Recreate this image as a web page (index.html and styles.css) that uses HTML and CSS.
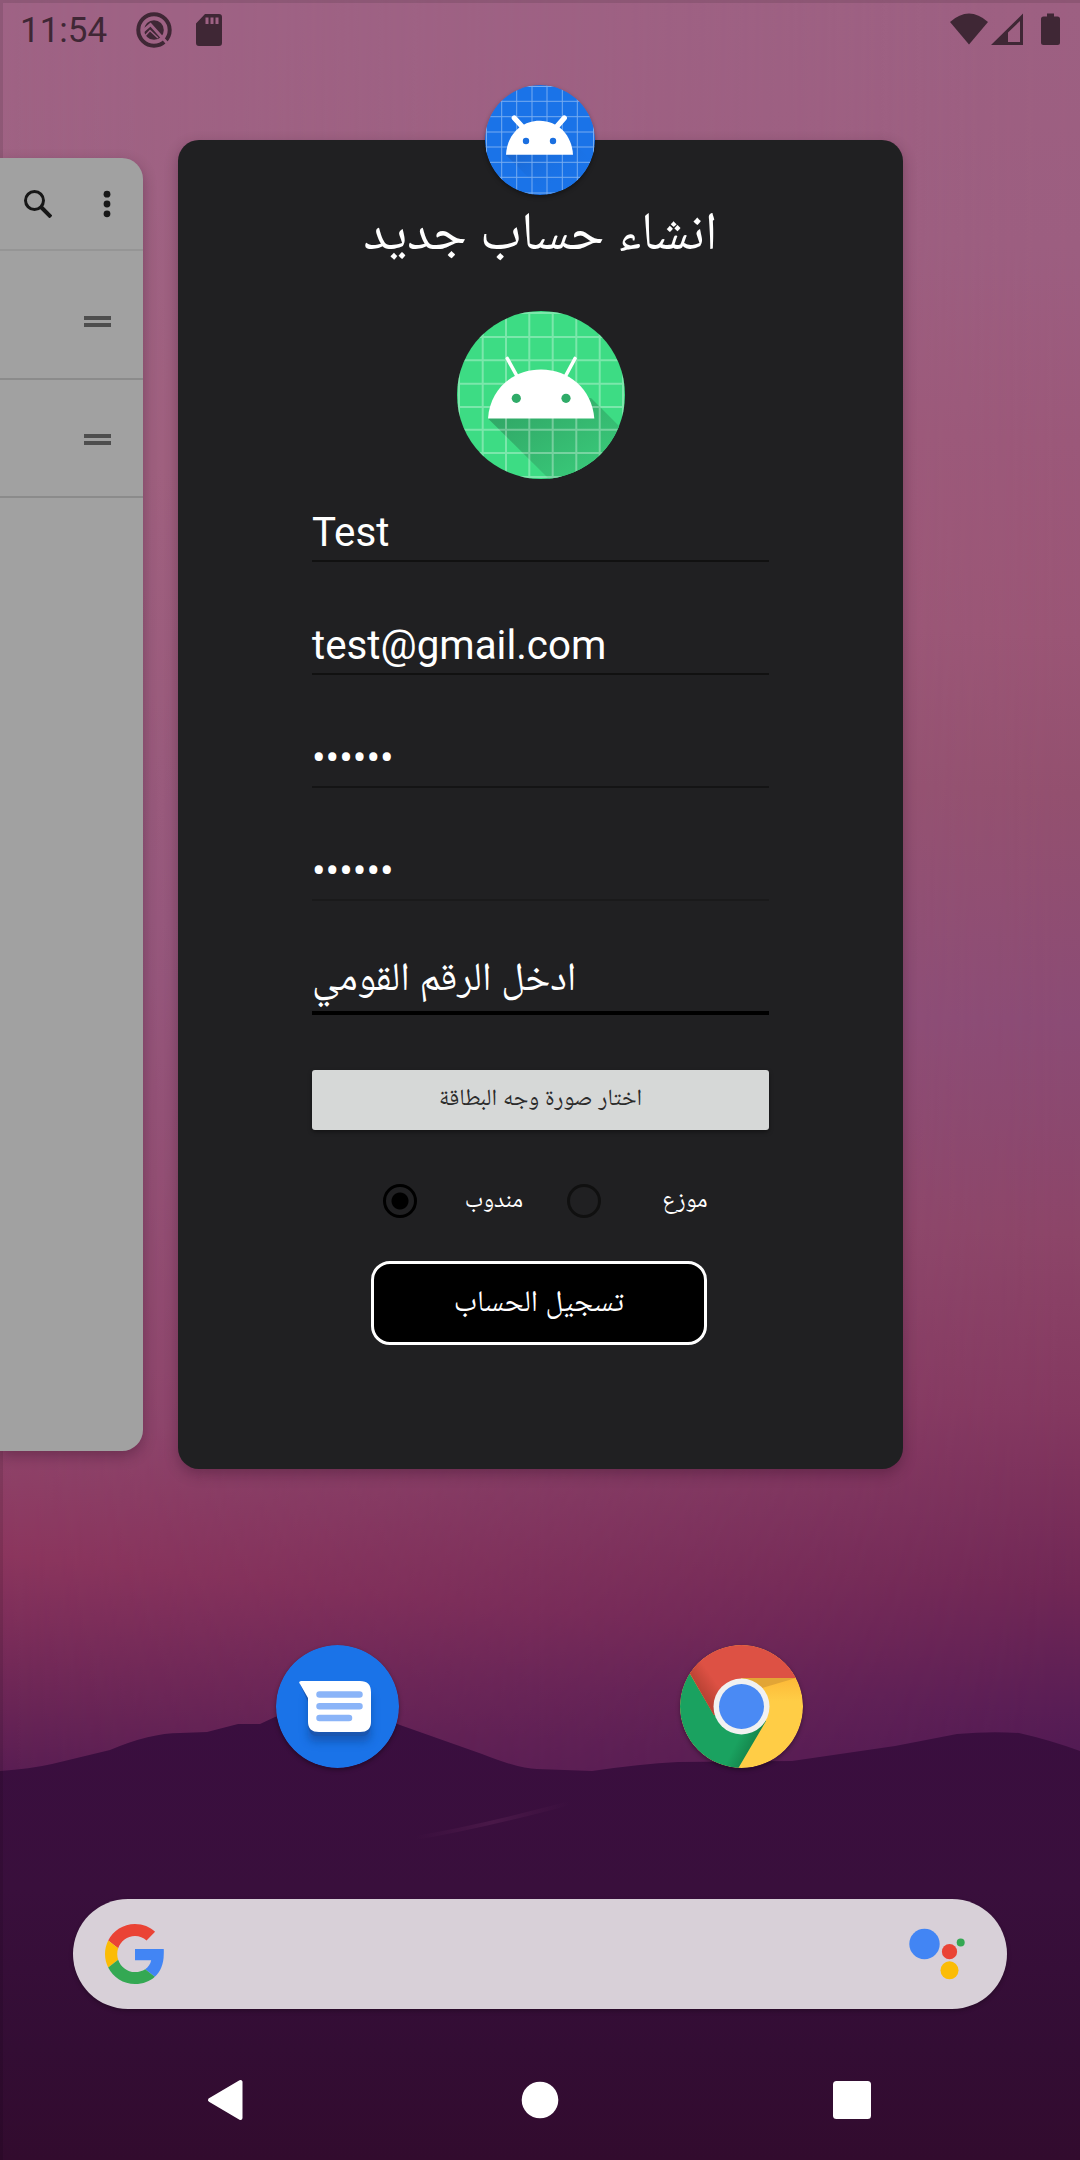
FILE: index.html
```html
<!DOCTYPE html>
<html lang="ar">
<head>
<meta charset="utf-8">
<title>Recent apps</title>
<link rel="stylesheet" href="styles.css">
</head>
<body>
<svg class="wallpaper" viewBox="0 0 1080 2160" aria-hidden="true">
  <defs>
    <linearGradient id="skyLeft" gradientUnits="userSpaceOnUse" x1="0" y1="0" x2="-180" y2="1790">
      <stop offset="0" stop-color="#9f6385"/><stop offset=".25" stop-color="#a06280"/>
      <stop offset=".5" stop-color="#985a7e"/><stop offset=".78" stop-color="#90486e"/>
      <stop offset=".86" stop-color="#8c365e"/><stop offset=".92" stop-color="#742a58"/>
      <stop offset="1" stop-color="#511a51"/>
    </linearGradient>
    <linearGradient id="skyRight" gradientUnits="userSpaceOnUse" x1="1080" y1="0" x2="1000" y2="1760">
      <stop offset="0" stop-color="#9d6082"/><stop offset=".14" stop-color="#9c5e80"/>
      <stop offset=".25" stop-color="#9b5879"/><stop offset=".36" stop-color="#9a5575"/>
      <stop offset=".45" stop-color="#93506f"/>
      <stop offset=".58" stop-color="#8b4b75"/><stop offset=".7" stop-color="#8c4568"/>
      <stop offset=".8" stop-color="#843860"/><stop offset=".9" stop-color="#702755"/>
      <stop offset=".97" stop-color="#581d55"/><stop offset="1" stop-color="#511a53"/>
    </linearGradient>
    <linearGradient id="fade" x1="0" y1="0" x2="1" y2="0">
      <stop offset="0" stop-color="#000"/><stop offset="1" stop-color="#fff"/>
    </linearGradient>
    <mask id="fadeMask"><rect width="1080" height="2160" fill="url(#fade)"/></mask>
    <linearGradient id="hill" x1="0" y1="0" x2="0" y2="1">
      <stop offset="0" stop-color="#3a0e3f"/><stop offset=".4" stop-color="#390f3c"/>
      <stop offset=".75" stop-color="#330d34"/><stop offset="1" stop-color="#320b2e"/>
    </linearGradient>
    <linearGradient id="ridge" gradientUnits="userSpaceOnUse" x1="415" y1="0" x2="570" y2="0">
      <stop offset="0" stop-color="#491848" stop-opacity="0"/><stop offset=".5" stop-color="#491848"/>
      <stop offset="1" stop-color="#491848" stop-opacity="0"/>
    </linearGradient>
  </defs>
  <rect width="1080" height="2160" fill="url(#skyLeft)"/>
  <rect width="1080" height="2160" fill="url(#skyRight)" mask="url(#fadeMask)"/>
  <path fill="url(#hill)" d="M0 1771Q30 1769 52 1764L110 1750Q150 1733 180 1733L207 1732L238 1724L260 1724L275 1717Q337 1698 400 1725L482 1754Q520 1769 537 1769L592 1771Q640 1764 678 1762L792 1761L895 1746L957 1734Q990 1731 1019 1733Q1050 1740 1080 1751V2160H0Z"/>
  <path fill="none" stroke="url(#ridge)" stroke-width="4" stroke-linecap="round" d="M415 1838Q480 1827 570 1803"/>
  <path fill="#000" opacity=".1" d="M0 0H1080V3H3V2160H0Z"/>
</svg>

<header class="status">
  <span class="clock">11:54</span>
  <svg class="status-q" viewBox="0 0 36 36"><circle cx="18" cy="18" r="15.700" fill="none" stroke="#3f2735" stroke-width="4"/><circle cx="18" cy="18" r="9.800" fill="#3f2735"/><path d="M7 19L14.500 12.500L31 31" fill="none" stroke="#9e6184" stroke-width="3"/><path d="M8 25L14 18.500L22 26" fill="none" stroke="#9e6184" stroke-width="1.500"/></svg>
  <svg class="status-sd" viewBox="0 0 26 32"><path fill="#3f2735" fill-rule="evenodd" d="M9 0H23Q26 0 26 3V29Q26 32 23 32H3Q0 32 0 29V9.500ZM9.500 3.500V10H12.500V3.500ZM14.500 3.500V10H17.500V3.500ZM19.500 3.500V10H22.500V3.500Z"/></svg>
  <span class="grow"></span>
  <svg class="status-right" viewBox="0 0 112 34"><g fill="#3f2735"><path d="M0 9Q19-8 38 9L19 31.500Z"/><path fill-rule="evenodd" d="M73 .500V32H41ZM70 8V29H58V19.500Z"/><path d="M97 .500H104V3.500H107.500Q110 3.500 110 6V29.500Q110 32 107.500 32H93.500Q91 32 91 29.500V6Q91 3.500 93.500 3.500H97Z"/></g></svg>
</header>

<main class="recents">
  <section class="task task-prev">
    <div class="toolbar">
      <svg class="search" viewBox="0 0 28 28"><circle cx="10.500" cy="10.500" r="9" fill="none" stroke="#171717" stroke-width="3"/><path d="M17 17L27 27" stroke="#171717" stroke-width="4"/></svg>
      <svg class="more" viewBox="0 0 8 28"><g fill="#171717"><circle cx="4" cy="4.200" r="3.400"/><circle cx="4" cy="14" r="3.400"/><circle cx="4" cy="23.800" r="3.400"/></g></svg>
    </div>
    <div class="item first"><i class="handle"></i></div>
    <div class="item"><i class="handle"></i></div>
  </section>

  <section class="task task-current">
    <svg class="app-icon" viewBox="0 0 110 110">
      <defs><clipPath id="c1"><circle cx="55" cy="55" r="55"/></clipPath>
      <linearGradient id="s1" x1="0" y1="0" x2="1" y2="1"><stop offset="0" stop-color="#1a5fc0"/><stop offset=".7" stop-color="#1a73e8" stop-opacity="0"/></linearGradient></defs>
      <g clip-path="url(#c1)"><rect width="110" height="110" fill="#1a73e8"/>
      <path fill="url(#s1)" d="M21 70L61 110H110V78L86 56Z"/>
      <path stroke="#76acf1" stroke-width="1" d="M16.700 0V110M31.700 0V110M47 0V110M62 0V110M77.300 0V110M92.300 0V110M0 16.300H110M0 31.700H110M0 47H110M0 62H110M0 77.300H110M0 92.300H110M0 1.500H110M0 108H110M1.500 0V110M108.500 0V110"/></g>
      <path fill="#fff" d="M21 69.700C22 50 36 35.700 54.500 35.700S87 50 88 69.700Z"/>
      <path stroke="#fff" stroke-width="5.300" stroke-linecap="round" d="M29.300 33L38 42.500M79.300 33L71 42.500"/>
      <circle cx="41" cy="56" r="3.200" fill="#1a6fe0"/><circle cx="68" cy="56" r="3.200" fill="#1a6fe0"/>
    </svg>
    <h1 class="title" dir="rtl"><span class="fit">انشاء حساب جديد</span></h1>
    <svg class="avatar" viewBox="0 0 168 168">
      <defs><clipPath id="c2"><circle cx="84" cy="84" r="84"/></clipPath>
      <linearGradient id="s2" x1="0" y1="0" x2="1" y2="1"><stop offset="0" stop-color="#2fa163"/><stop offset="1" stop-color="#3bd07d"/></linearGradient></defs>
      <g clip-path="url(#c2)"><rect width="168" height="168" fill="#3ddc84"/>
      <path fill="url(#s2)" d="M31 107.500L92 168H168V121L134 87Z"/>
      <path stroke="#fff" stroke-opacity=".32" stroke-width="2" d="M25.700 0V168M49 0V168M72.300 0V168M95.700 0V168M119.300 0V168M142.700 0V168M0 26H168M0 49.300H168M0 72.700H168M0 96H168M0 118.700H168M0 142H168M2 0V168M166 0V168M0 2H168M0 166H168"/></g>
      <path fill="#fff" d="M31 107.500C33 78 56 58.500 84 58.500S135 78 137.300 107.500Z"/>
      <path stroke="#fff" stroke-width="3.600" stroke-linecap="round" d="M50.300 47.500L60.500 66M118 47.500L108 66"/>
      <circle cx="59.300" cy="87.300" r="4.600" fill="#2fab68"/><circle cx="109" cy="87.300" r="4.600" fill="#2fab68"/>
    </svg>
    <div class="form">
      <div class="field">Test</div>
      <div class="field">test@gmail.com</div>
      <div class="field secret">••••••</div>
      <div class="field secret last-secret">••••••</div>
      <div class="field active"><span class="fit" dir="rtl">ادخل الرقم القومي</span></div>
      <div class="pick"><span class="fit" dir="rtl">اختار صورة وجه البطاقة</span></div>
      <div class="roles">
        <i class="radio on"></i><span class="fit role-a" dir="rtl">مندوب</span>
        <i class="radio"></i><span class="fit role-b" dir="rtl">موزع</span>
      </div>
      <div class="submit"><span class="fit" dir="rtl">تسجيل الحساب</span></div>
    </div>
  </section>
</main>

<nav class="dock">
  <svg viewBox="0 0 123 123"><defs><filter id="soft" x="-20%" y="-20%" width="140%" height="150%"><feGaussianBlur stdDeviation="4"/></filter></defs>
    <circle cx="61.500" cy="61.500" r="61.500" fill="#1a73e8"/>
    <path fill="#0e3f8c" opacity=".5" filter="url(#soft)" d="M32 50H95V89Q95 97 86 97H41Q32 97 32 89Z"/>
    <path fill="#1a56b0" d="M25 41Q23 37 27 36.500H85Q95 37 95 47V81Q94 91 85 91H42Q33 91 32 81V57Z"/>
    <path fill="#fff" d="M24 39Q22 36.500 25 36H84Q95 36 95 47V77Q95 87 84 87H43Q32 87 32 77V53Z"/>
    <path stroke="#8ab4f8" stroke-width="6.500" stroke-linecap="round" d="M43.500 49.500H83.500M43.500 61.200H83.500M43.500 73H73"/>
  </svg>
  <svg viewBox="0 0 123 123"><defs><clipPath id="c3"><circle cx="61.500" cy="61.500" r="61.500"/></clipPath>
      <linearGradient id="yg" x1="0" y1="33" x2="0" y2="56" gradientUnits="userSpaceOnUse"><stop offset="0" stop-color="#fdb938"/><stop offset="1" stop-color="#ffcd46"/></linearGradient>
      <linearGradient id="rg" x1="24" y1="50" x2="38" y2="40" gradientUnits="userSpaceOnUse"><stop offset="0" stop-color="#bb4335"/><stop offset="1" stop-color="#dd5144"/></linearGradient>
      <linearGradient id="gg" x1="76" y1="103" x2="58" y2="94" gradientUnits="userSpaceOnUse"><stop offset="0" stop-color="#138048"/><stop offset="1" stop-color="#1aa260"/></linearGradient></defs>
    <g clip-path="url(#c3)"><rect width="123" height="123" fill="url(#yg)"/>
    <path fill="#e2a536" d="M61 33H116L82 43Z"/>
    <path fill="url(#gg)" d="M0 10L10 29L34 70L62 62L86 76L58.400 123H0Z"/>
    <path fill="url(#rg)" d="M-5 0H130V33H61.500L34 70.500L9 27Z"/></g>
    <circle cx="61.500" cy="61.500" r="28" fill="#f1f1f1"/><circle cx="61.500" cy="61.500" r="22.500" fill="#4a8af4"/>
  </svg>
</nav>

<div class="searchbar">
  <svg class="google" viewBox="0 0 48 48"><path fill="#EA4335" d="M24 9.500c3.540 0 6.710 1.220 9.210 3.600l6.850-6.850C35.900 2.380 30.470 0 24 0 14.620 0 6.510 5.380 2.560 13.220l7.980 6.190C12.430 13.720 17.740 9.500 24 9.500z"/><path fill="#4285F4" d="M46.980 20H24V29.020h12.940c-.58 2.960-2.260 5.480-4.780 7.180l7.730 6c4.510-4.180 7.090-10.360 7.090-17.650C47.100 22.500 47.100 21.500 46.980 20z"/><path fill="#FBBC05" d="M10.530 28.590c-.48-1.450-.76-2.990-.76-4.590s.27-3.140.76-4.590l-7.980-6.190C.92 16.460 0 20.120 0 24c0 3.880.92 7.540 2.560 10.780l7.970-6.190z"/><path fill="#34A853" d="M24 48c6.480 0 11.930-2.130 15.890-5.810l-7.730-6c-2.150 1.450-4.920 2.300-8.160 2.300-6.260 0-11.570-4.220-13.470-9.910l-7.980 6.190C6.510 42.620 14.620 48 24 48z"/></svg>
  <svg class="assistant" viewBox="0 0 58 54"><circle cx="15.500" cy="17" r="15.200" fill="#4285f4"/><circle cx="40.500" cy="24.700" r="7.600" fill="#ea4335"/><circle cx="40.500" cy="43.300" r="9" fill="#fbbc05"/><circle cx="51.700" cy="15.600" r="4" fill="#34a853"/></svg>
</div>

<footer class="navbar">
  <svg viewBox="0 0 40 44"><path fill="#fff" stroke="#fff" stroke-width="4" stroke-linejoin="round" d="M4 22L34.500 4V40Z"/></svg>
  <svg viewBox="0 0 40 44"><circle cx="21" cy="22" r="18.300" fill="#fff"/></svg>
  <svg viewBox="0 0 40 44"><rect x="1" y="3" width="38" height="38" rx="3.500" fill="#fff"/></svg>
</footer>
</body>
</html>
```
FILE: styles.css
```css
* { box-sizing: border-box; }
body {
  margin: 0;
  width: 1080px;
  height: 2160px;
  overflow: hidden;
  position: relative;
  display: flex;
  flex-direction: column;
  font-family: Roboto, "Noto Naskh Arabic", "Noto Sans Arabic", "DejaVu Sans", sans-serif;
  background: #9e6184;
}
svg { display: block; flex: none; }
.wallpaper { position: absolute; inset: 0; z-index: -1; width: 1080px; height: 2160px; }

.status { height: 60px; flex: none; display: flex; align-items: center; padding: 0 18px 0 20px; color: #3f2735; }
.clock { font-size: 35px; width: 115.500px; line-height: 60px; padding-top: 2px; }
.status-q { width: 36px; height: 36px; }
.status-sd { width: 26px; height: 32px; margin-left: 24px; }
.grow { flex: 1; }
.status-right { width: 112px; height: 34px; }

.recents { height: 1409px; flex: none; margin-top: 80px; display: flex; align-items: flex-start; gap: 35px; }
.task { flex: none; box-shadow: 0 5px 14px rgba(40, 10, 30, .32); }
.task-prev { width: 143px; height: 1292.500px; margin-top: 18px; background: #a1a1a1; border-radius: 0 21px 21px 0; overflow: hidden; }
.toolbar { height: 93px; display: flex; align-items: center; padding: 1px 32px 0 24px; justify-content: space-between; border-bottom: 2px solid #959595; }
.search { width: 28px; height: 28px; }
.more { width: 8px; height: 28px; }
.item { height: 118px; border-bottom: 2px solid #8b8b8b; display: flex; align-items: center; justify-content: flex-end; padding: 2px 32px 0 0; }
.item.first { height: 129px; padding-top: 13px; }
.handle { width: 27px; height: 11px; border-top: 4px solid #4e4e4e; border-bottom: 4px solid #4e4e4e; }

.task-current { position: relative; width: 725px; height: 1329px; background: #202022; border-radius: 21px; color: #fff; display: flex; flex-direction: column; align-items: center; }
.app-icon { position: absolute; left: 307px; top: -55px; width: 110px; height: 110px; border-radius: 50%; box-shadow: 0 2px 4px rgba(0, 0, 0, .35); }
.title { margin: 0; height: 171px; padding-top: 55px; font-size: 53.500px; line-height: 72px; font-weight: 400; }
.fit { display: inline-block; white-space: nowrap; }
.avatar { width: 168px; height: 168px; }
.form { width: 457px; display: flex; flex-direction: column; align-items: stretch; }
.field { height: 113px; padding-top: 61px; border-bottom: 2px solid #111; font-size: 40.300px; line-height: 46px; flex: none; white-space: nowrap; }
.field:first-child { height: 83px; padding-top: 31px; }
.secret { border-bottom-color: #141415; }
.last-secret { border-bottom-color: #1a1a1b; }
.active { height: 114px; border-bottom: 4px solid #000; padding-top: 51px; font-size: 39.900px; line-height: 50px; }
.pick { height: 60px; margin-top: 55px; background: #d6d8d7; border-radius: 3px; color: #2b2b2b; font-size: 23.300px; line-height: 54px; text-align: center; box-shadow: 0 2px 4px rgba(0, 0, 0, .4); }
.roles { height: 34px; margin: 54px 0 0 71px; display: flex; align-items: center; font-size: 23.700px; line-height: 34px; }
.radio { flex: none; width: 34px; height: 34px; border: 3.500px solid #101010; border-radius: 50%; }
.radio.on { border-color: #000; background: radial-gradient(circle, #000 8px, transparent 9px); }
.role-a, .role-b { margin-top: -4px; }
.role-a { margin-left: 49px; width: 57px; margin-right: 43.500px; }
.role-b { margin-left: 63px; width: 44px; }
.submit { width: 336px; height: 84px; margin: 43px 0 0 59px; border: 3px solid #fff; border-radius: 19px; background: #000; font-size: 30px; line-height: 73px; text-align: center; }

.dock { margin-top: 95.500px; height: 123px; flex: none; display: flex; gap: 281px; padding-left: 276px; }
.dock svg { width: 123px; height: 123px; border-radius: 50%; box-shadow: 0 2px 4px rgba(0, 0, 0, .35); }
.searchbar { height: 110px; flex: none; margin: 131.500px 73px 0; border-radius: 55px; background: #d8d0d8; display: flex; align-items: center; justify-content: space-between; padding: 0 40px 0 32px; box-shadow: 0 2px 4px rgba(0, 0, 0, .25); }
.google { width: 60px; height: 60px; }
.assistant { width: 58px; height: 54px; }
.navbar { margin: 69px 208px 0 206px; height: 44px; flex: none; display: flex; justify-content: space-between; }
.navbar svg { width: 40px; height: 44px; }
```
